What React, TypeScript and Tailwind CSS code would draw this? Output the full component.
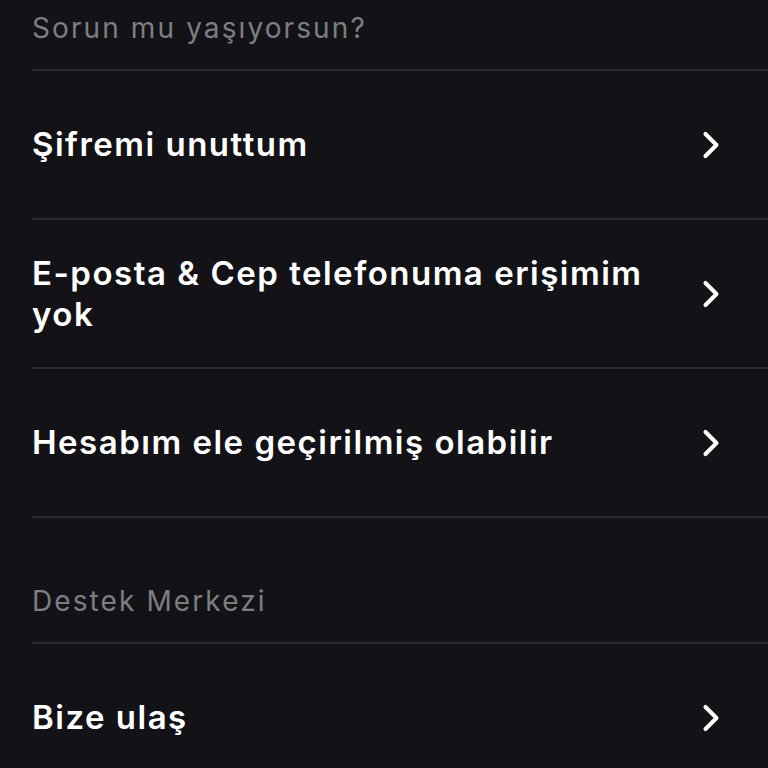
import { ChevronRight } from "lucide-react";

type Row = { label: string };

const problems: Row[] = [
  { label: "Şifremi unuttum" },
  { label: "E-posta & Cep telefonuma erişimim yok" },
  { label: "Hesabım ele geçirilmiş olabilir" },
];

const support: Row[] = [{ label: "Bize ulaş" }];

function SectionHeader({ title, first }: { title: string; first?: boolean }) {
  return (
    <div
      className={`flex items-end border-b-2 border-[#2a2b2f] pb-[27px] ${
        first ? "h-[71px]" : "h-[126px]"
      }`}
    >
      <p className="text-[28px] leading-[28px] tracking-[2.1px] text-[#7d7e82]">
        {title}
      </p>
    </div>
  );
}

function MenuRow({ label }: Row) {
  return (
    <button className="flex h-[149px] w-full items-center gap-6 border-b-2 border-[#2a2b2f] pr-[35px] text-left">
      <span className="flex-1 text-[33px] font-semibold leading-[41px] tracking-[1.5px] text-white">
        {label}
      </span>
      <ChevronRight size={44} strokeWidth={2.2} className="shrink-0 text-white" />
    </button>
  );
}

export default function App() {
  return (
    <div
      className="h-[768px] w-[768px] overflow-hidden bg-[#131317] pl-8"
      style={{ fontFamily: "Inter, 'Noto Sans', sans-serif" }}
    >
      <SectionHeader title="Sorun mu yaşıyorsun?" first />
      {problems.map((row) => (
        <MenuRow key={row.label} label={row.label} />
      ))}
      <SectionHeader title="Destek Merkezi" />
      {support.map((row) => (
        <MenuRow key={row.label} label={row.label} />
      ))}
    </div>
  );
}
